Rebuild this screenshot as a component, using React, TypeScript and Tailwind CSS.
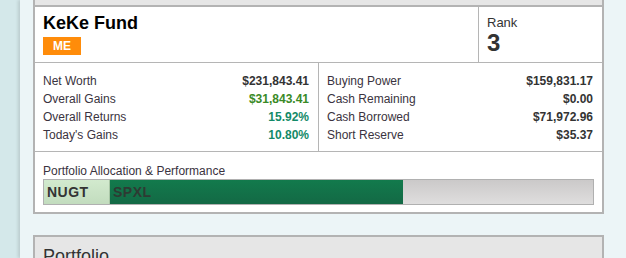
const font = { fontFamily: '"Liberation Sans", Arial, sans-serif' };

type Stat = { label: string; value: string; tone?: string };

const LEFT: Stat[] = [
  { label: "Net Worth", value: "$231,843.41" },
  { label: "Overall Gains", value: "$31,843.41", tone: "text-[#3a8a26]" },
  { label: "Overall Returns", value: "15.92%", tone: "text-[#138a68]" },
  { label: "Today's Gains", value: "10.80%", tone: "text-[#138a68]" },
];

const RIGHT: Stat[] = [
  { label: "Buying Power", value: "$159,831.17" },
  { label: "Cash Remaining", value: "$0.00" },
  { label: "Cash Borrowed", value: "$71,972.96" },
  { label: "Short Reserve", value: "$35.37" },
];

function StatList({ items, className }: { items: Stat[]; className?: string }) {
  return (
    <ul className={className}>
      {items.map((s) => (
        <li key={s.label} className="flex h-[18px] items-center justify-between text-[12px]">
          <span className="text-[#3a3340]">{s.label}</span>
          <span className={`font-bold ${s.tone ?? "text-[#333]"}`}>{s.value}</span>
        </li>
      ))}
    </ul>
  );
}

export default function App() {
  return (
    <div className="flex h-[258px] w-[626px] overflow-hidden bg-[#edf5f7]" style={font}>
      <div className="w-[20px] shrink-0 bg-[#d4e8ea]" />
      <div className="flex-1 bg-[#ecf5f7] pl-[13px] shadow-[-2px_0_3px_rgba(0,0,0,0.12)]">
        {/* fund card */}
        <div className="w-[571px] border-x-2 border-b-2 border-[#b3b3b3] bg-white">
          <div className="h-[5px] bg-[#e6e6e6]" />
          <div className="h-[2px] bg-[#b3b3b3]" />

          <div className="flex h-[56px] border-b border-[#b5b5b5]">
            <div className="flex-1 pl-[8px] pt-[5px]">
              <div className="text-[18px] font-bold leading-[22px] text-black">KeKe Fund</div>
              <div className="mt-[3px] flex h-[18px] w-[38px] items-center justify-center bg-[#ff8c0a] text-[12px] font-bold text-white">
                ME
              </div>
            </div>
            <div className="w-[124px] border-l border-[#b5b5b5] pl-[8px] pt-[9px] text-[#333]">
              <div className="text-[13px] leading-[14px]">Rank</div>
              <div className="text-[24px] font-bold leading-[26px]">3</div>
            </div>
          </div>

          <div className="flex border-b border-[#b5b5b5]">
            <StatList items={LEFT} className="w-[283px] pb-[7px] pl-[8px] pr-[9px] pt-[9px]" />
            <StatList items={RIGHT} className="flex-1 border-l border-[#b5b5b5] pb-[7px] pl-[8px] pr-[9px] pt-[9px]" />
          </div>

          <div className="px-[8px] pb-[7px] pt-[11px]">
            <div className="text-[12px] leading-[16px] text-[#3a3340]">Portfolio Allocation &amp; Performance</div>
            <div className="flex h-[26px] w-[551px] border border-[#b0b0b0] bg-gradient-to-b from-[#cbc9c9] to-[#dfdede]">
              <div className="flex w-[66px] items-center border-r border-[#a9c6a6] bg-gradient-to-b from-[#d2eace] to-[#c2dcbe] pl-[3px] text-[14px] font-bold tracking-[0.5px] text-[#333]">
                NUGT
              </div>
              <div className="flex w-[293px] items-center bg-gradient-to-b from-[#127a4c] to-[#136945] pl-[3px] text-[14px] font-bold tracking-[0.5px] text-[#2e3a33]">
                SPXL
              </div>
            </div>
          </div>
        </div>

        {/* portfolio card */}
        <div className="mt-[21px] h-[40px] w-[571px] border-2 border-[#b3b3b3] bg-[#e6e6e6] pl-[8px] pt-[6px] text-[18px] text-[#333]">
          Portfolio
        </div>
      </div>
    </div>
  );
}
